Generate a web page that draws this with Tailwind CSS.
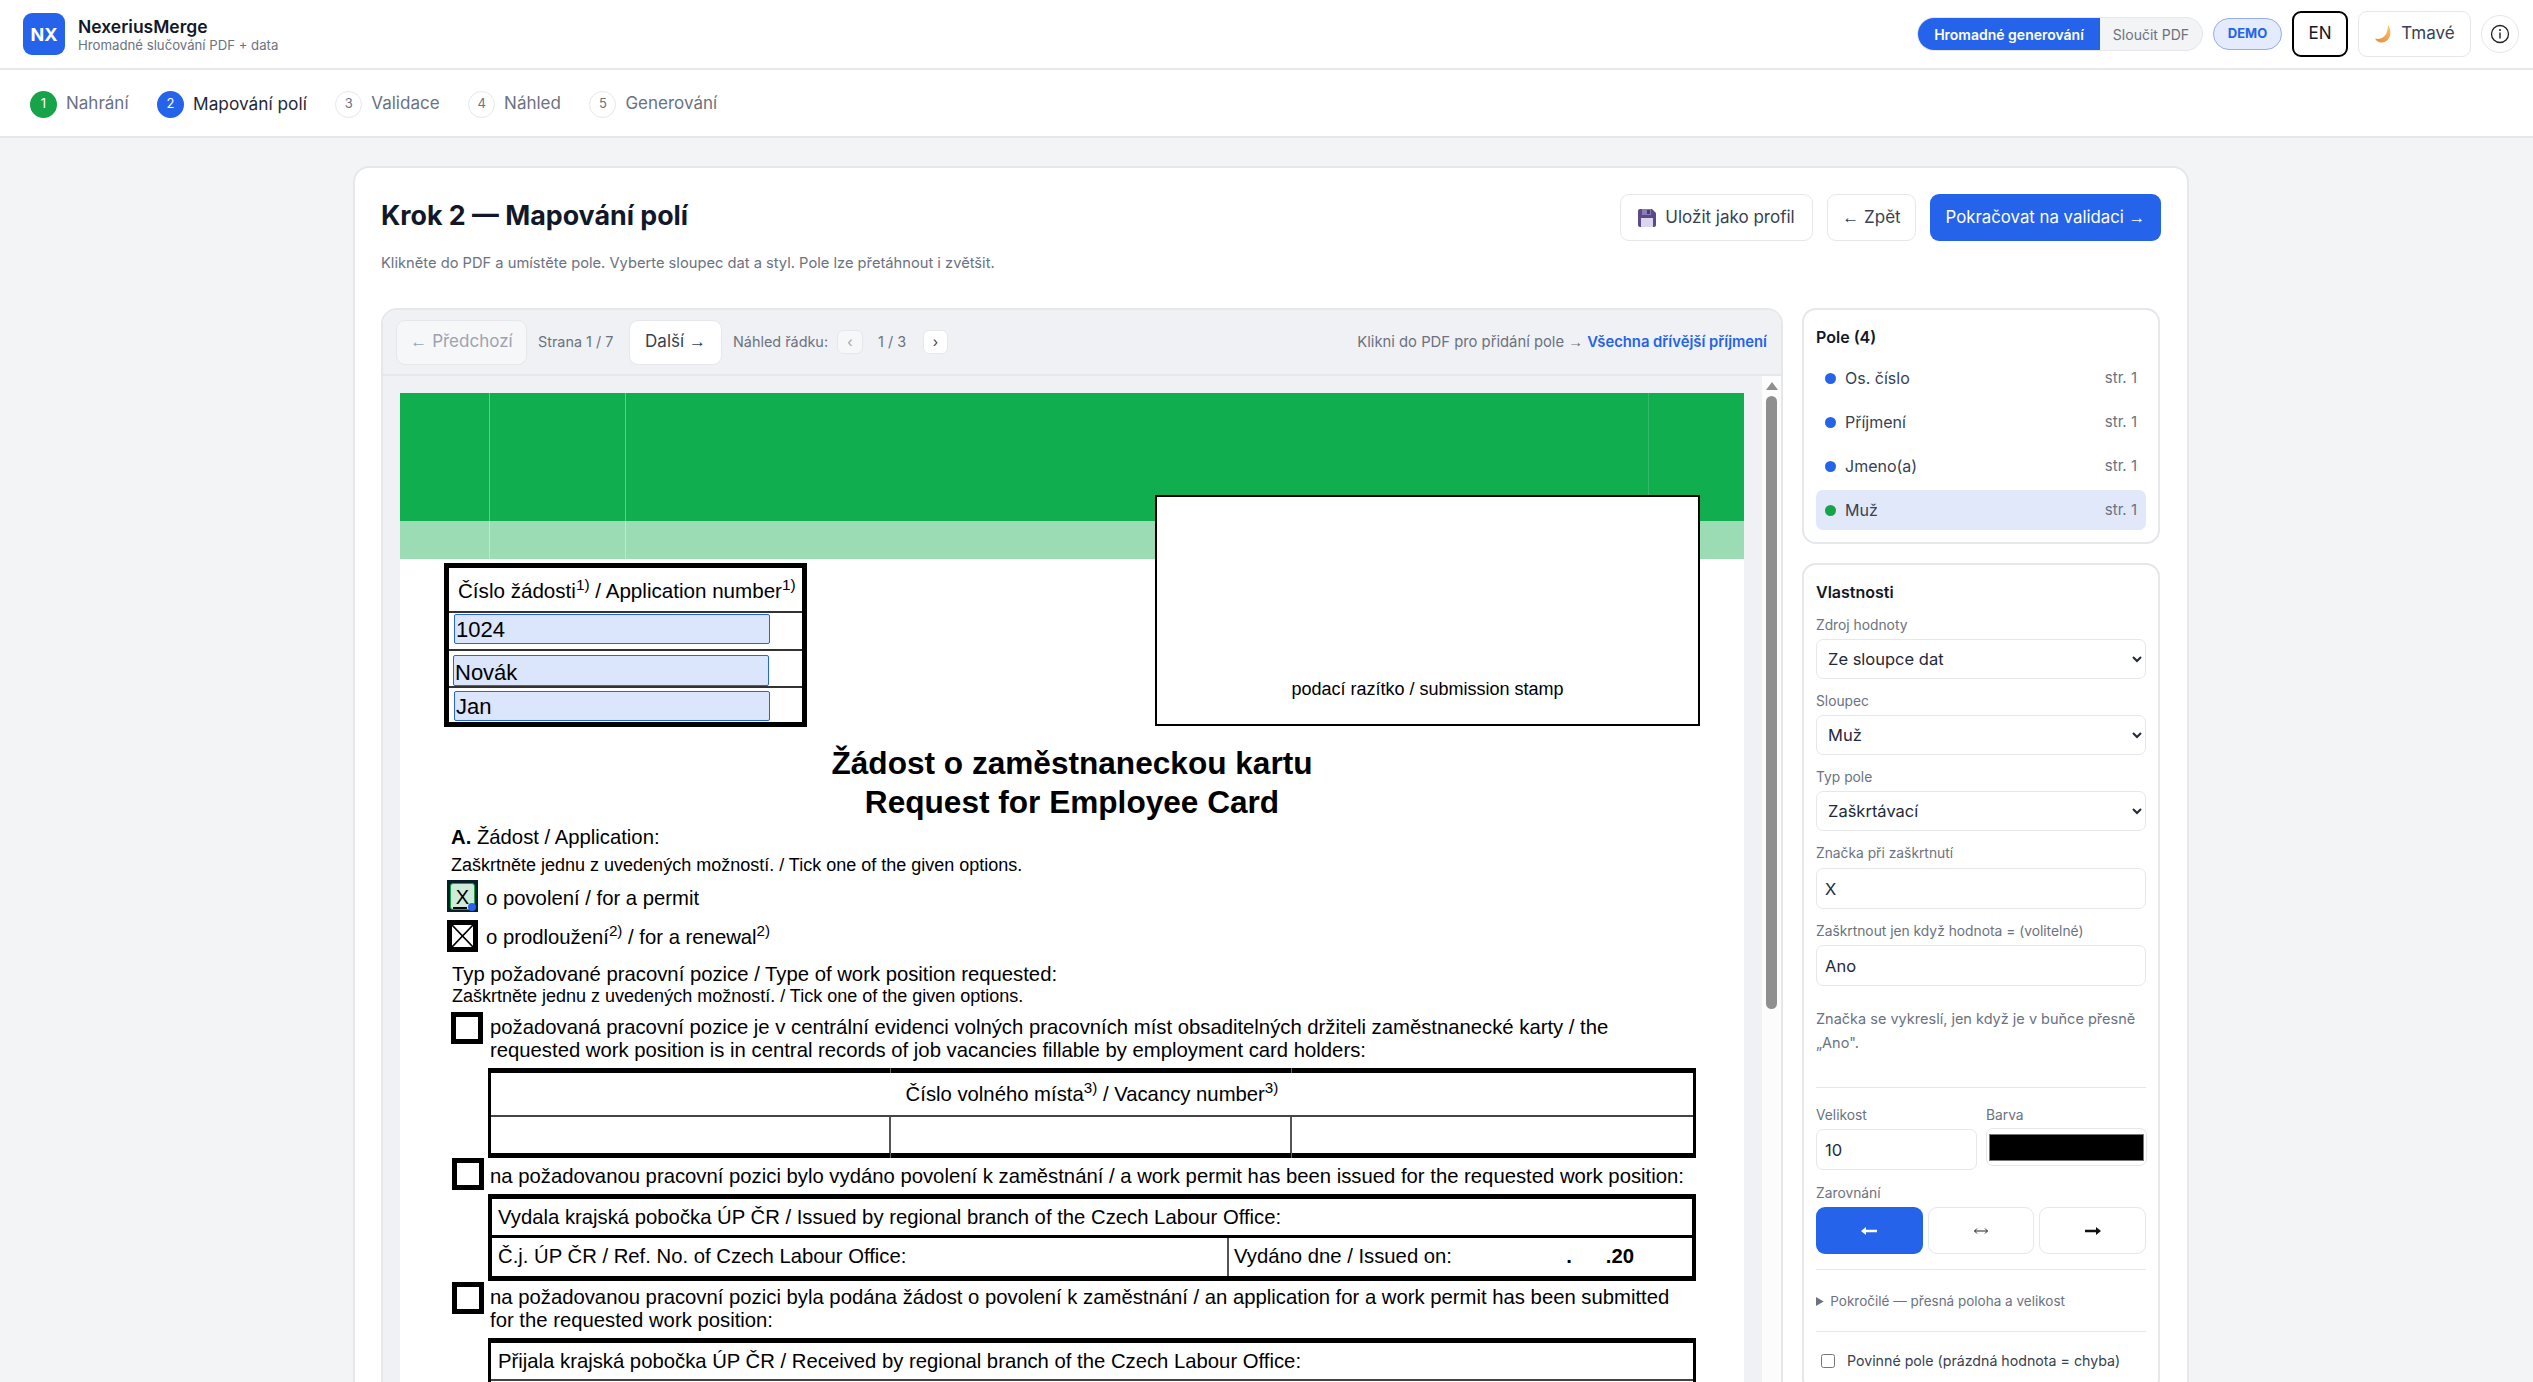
<!DOCTYPE html>
<html lang="cs">
<head>
<meta charset="utf-8">
<title>NexeriusMerge</title>
<script src="https://cdn.jsdelivr.net/npm/@tailwindcss/browser@4"></script>
</head>
<body class="h-screen overflow-hidden bg-[#f3f4f6] font-['Inter',sans-serif] text-[#111827]">

<header class="h-[70px] bg-white border-b-2 border-[#e5e7eb] flex items-center justify-between pl-[23px] pr-[14px]">
  <div class="flex items-center gap-[13px]">
    <div class="w-[42px] h-[42px] rounded-[9px] bg-[#2563eb] text-white font-bold text-[18px] flex items-center justify-center">NX</div>
    <div class="flex flex-col">
      <span class="text-[17.500px] leading-[21px] font-semibold">NexeriusMerge</span>
      <span class="text-[13.200px] leading-[16px] text-[#6b7280]">Hromadné slučování PDF + data</span>
    </div>
  </div>
  <div class="flex items-center">
    <div class="flex w-[286px] h-[34px] rounded-full overflow-hidden border border-[#e5e7eb] bg-[#f3f4f6] text-[14px]">
      <span class="w-[182px] bg-[#2563eb] text-white font-semibold flex items-center justify-center">Hromadné generování</span>
      <span class="flex-1 text-[#6b7280] flex items-center justify-center">Sloučit PDF</span>
    </div>
    <span class="ml-[10px] w-[69px] h-[32px] rounded-full bg-[#e4ebfc] border border-[#93aee8] text-[#2563eb] text-[13px] font-bold flex items-center justify-center">DEMO</span>
    <button class="ml-[10px] w-[56px] h-[46px] rounded-[9px] border-[2.500px] border-black bg-white text-[17px]">EN</button>
    <button class="ml-[10px] w-[113px] h-[46px] rounded-[9px] border border-[#e5e7eb] bg-white text-[17px] text-[#374151] flex items-center justify-center gap-[7px]">
      <svg width="20" height="20" viewBox="0 0 20 20"><defs><linearGradient id="moon" x1="0.800" y1="0" x2="0.200" y2="1"><stop offset="0" stop-color="#f8c26a"/><stop offset="1" stop-color="#e8913f"/></linearGradient></defs><path d="M14 1c5 7 2 17-6 17.500-3 .2-5.500-1-7-4 5 1.200 9-.5 11-4.500 1.500-3 2-6 2-9z" fill="url(#moon)"/></svg>
      <span>Tmavé</span>
    </button>
    <button class="ml-[10px] w-[38px] h-[38px] rounded-full border border-[#e5e7eb] bg-white flex items-center justify-center">
      <svg width="20" height="20" viewBox="0 0 20 20" fill="none" stroke="#222"><circle cx="10" cy="10" r="8.500" stroke-width="1.300"/><circle cx="10" cy="6" r="1" fill="#222" stroke="none"/><path d="M10 8.500v6" stroke-width="1.400"/></svg>
    </button>
  </div>
</header>

<nav class="h-[68px] bg-white border-b-2 border-[#e5e7eb] flex items-center pl-[30px] pt-[2px] gap-[28.500px] text-[17px]">
  <div class="flex items-center gap-[9px]"><span class="w-[27px] h-[27px] rounded-full bg-[#16a34a] text-white text-[13px] flex items-center justify-center">1</span><span class="text-[#6b7280]">Nahrání</span></div>
  <div class="flex items-center gap-[9px]"><span class="w-[27px] h-[27px] rounded-full bg-[#2563eb] text-white text-[13px] flex items-center justify-center">2</span><span class="text-[17.300px] text-[#1f2937]">Mapování polí</span></div>
  <div class="flex items-center gap-[9px]"><span class="w-[27px] h-[27px] rounded-full border border-[#e5e7eb] bg-white text-[#6b7280] text-[13px] flex items-center justify-center">3</span><span class="text-[#6b7280]">Validace</span></div>
  <div class="flex items-center gap-[9px]"><span class="w-[27px] h-[27px] rounded-full border border-[#e5e7eb] bg-white text-[#6b7280] text-[13px] flex items-center justify-center">4</span><span class="text-[#6b7280]">Náhled</span></div>
  <div class="flex items-center gap-[9px]"><span class="w-[27px] h-[27px] rounded-full border border-[#e5e7eb] bg-white text-[#6b7280] text-[13px] flex items-center justify-center">5</span><span class="text-[#6b7280]">Generování</span></div>
</nav>

<main class="pt-[28px] pl-[353px]">
  <section class="w-[1836px] bg-white border-2 border-[#e5e7eb] rounded-[16px] px-[26px] pt-[26px]">
    <div class="flex items-start justify-between">
      <div class="pt-[1px]">
        <h1 class="text-[26.800px] leading-[40px] font-bold">Krok 2 — Mapování polí</h1>
        <p class="mt-[18px] text-[14.700px] leading-[20px] text-[#6b7280]">Klikněte do PDF a umístěte pole. Vyberte sloupec dat a styl. Pole lze přetáhnout i zvětšit.</p>
      </div>
      <div class="flex items-center gap-[14px] text-[17px]">
        <button class="h-[47px] w-[193px] rounded-[9px] border border-[#e5e7eb] bg-white text-[#374151] flex items-center justify-center gap-[9px]">
          <svg width="18" height="18" viewBox="0 0 18 18"><path d="M0 2a2 2 0 0 1 2-2h12l4 4v12a2 2 0 0 1-2 2H2a2 2 0 0 1-2-2z" fill="#5b4a86"/><rect x="4" y="0" width="9" height="6" fill="#8b7cb8"/><rect x="9" y="1" width="3" height="4" fill="#4a3b70"/><rect x="3" y="9" width="12" height="9" fill="#dcd5ef"/></svg>
          <span>Uložit jako profil</span>
        </button>
        <button class="h-[47px] w-[89px] rounded-[9px] border border-[#e5e7eb] bg-white text-[#374151]"><span class="font-['Liberation_Sans']">←</span> Zpět</button>
        <button class="h-[47px] w-[231px] rounded-[9px] bg-[#2563eb] text-white text-[16.800px]">Pokračovat na validaci <span class="font-['Liberation_Sans']">→</span></button>
      </div>
    </div>

    <div class="mt-[35px] flex gap-[19px] items-start">
      <div class="w-[1402px] border-2 border-[#e5e7eb] rounded-t-[16px] overflow-hidden">
        <div class="h-[66px] bg-[#eff1f4] border-b-2 border-[#e5e7eb] pl-[13px] pr-[14px] flex items-center text-[14.400px] text-[#6b7280]">
          <button class="w-[131px] h-[45px] rounded-[9px] border border-[#e5e7eb] bg-[#f6f7f8] text-[#9ca3af] text-[17px]"><span class="font-['Liberation_Sans']">←</span> Předchozí</button>
          <span class="ml-[11px] w-[91px]">Strana 1 / 7</span>
          <button class="w-[93px] h-[45px] rounded-[9px] border border-[#e5e7eb] bg-white text-[#374151] text-[17px]">Další <span class="font-['Liberation_Sans']">→</span></button>
          <span class="ml-[11px] w-[104px] whitespace-nowrap">Náhled řádku:</span>
          <button class="w-[26px] h-[24px] rounded-[6px] border border-[#e5e7eb] bg-[#f6f7f8] text-[#9ca3af] text-[14px] leading-none">‹</button>
          <span class="ml-[15px] w-[45px]">1 / 3</span>
          <button class="w-[25px] h-[24px] rounded-[6px] border border-[#e5e7eb] bg-white text-[#374151] text-[14px] leading-none">›</button>
          <span class="ml-auto text-[14.800px]">Klikni do PDF pro přidání pole <span class="font-['Liberation_Sans']">→</span> <b class="font-semibold text-[#2563eb]">Všechna dřívější příjmení</b></span>
        </div>
        <div class="flex h-[1100px] bg-[#eff1f4]">
          <div class="flex-1 pl-[17px] pr-[17px] pt-[17px]">
            <div class="relative w-[1344px] h-[1900px] bg-white text-black font-['Liberation_Sans',Arial,sans-serif] text-[20.300px] leading-[24px]">
              <div class="h-[128px] bg-[#11ae50]"></div>
              <div class="h-[38px] bg-[#9cdcb5]"></div>
              <i class="absolute top-0 left-[89px] w-px h-[166px] bg-white/35"></i>
              <i class="absolute top-0 left-[225px] w-px h-[166px] bg-white/35"></i>
              <i class="absolute top-0 left-[1248px] w-px h-[102px] bg-white/15"></i>

              <div class="absolute left-[755px] top-[102px] w-[545px] h-[231px] bg-white border-2 border-black flex items-end justify-center pb-[23px] text-[18px]">podací razítko / submission stamp</div>

              <div class="absolute left-[44px] top-[170px] w-[363px] h-[164px] border-[5px] border-black bg-white flex flex-col">
                <div class="h-[43px] pl-[9px] pt-[2px] flex items-center text-[20.600px] whitespace-nowrap"><span>Číslo žádosti<sup>1)</sup> / Application number<sup>1)</sup></span></div>
                <div class="h-[38px] border-t-2 border-[#333]"></div>
                <div class="h-[37px] border-t-2 border-[#333]"></div>
                <div class="flex-1 border-t-2 border-[#333]"></div>
              </div>
              <div class="absolute left-[54px] top-[221px] w-[316px] h-[30px] bg-[#dbe5fb] border-[1.500px] border-[#2563eb] rounded-[2px] pl-[1px] text-[22px] leading-[30px]">1024</div>
              <div class="absolute left-[53px] top-[262px] w-[316px] h-[31px] bg-[#dbe5fb] border-[1.500px] border-[#2563eb] rounded-[2px] pl-[1px] text-[22px] leading-[34px]">Novák</div>
              <div class="absolute left-[54px] top-[298px] w-[316px] h-[30px] bg-[#dbe5fb] border-[1.500px] border-[#2563eb] rounded-[2px] pl-[1px] text-[22px] leading-[30px]">Jan</div>

              <div class="absolute left-0 top-[351px] w-full text-center font-bold text-[31.600px] leading-[39px]">Žádost o zaměstnaneckou kartu<br>Request for Employee Card</div>

              <div class="absolute left-[51px] top-[432px]"><b>A.</b> Žádost / Application:</div>
              <div class="absolute left-[51px] top-[460px] text-[18px] whitespace-nowrap">Zaškrtněte jednu z uvedených možností. / Tick one of the given options.</div>

              <div class="absolute left-[47px] top-[487px] w-[31px] h-[32px] bg-[#06202a]"></div>
              <div class="absolute left-[50px] top-[490px] w-[25px] h-[27px] rounded-[3px] border-[1.500px] border-[#16a34a] bg-[#cdebd8] text-[20px] leading-[26px] text-center">X</div>
              <i class="absolute left-[53px] top-[514px] w-[14px] h-[2px] bg-black"></i>
              <i class="absolute left-[68px] top-[510px] w-[8px] h-[8px] rounded-full bg-[#2563eb]"></i>
              <div class="absolute left-[86px] top-[493px]">o povolení / for a permit</div>

              <svg class="absolute left-[47px] top-[527px]" width="31" height="32" viewBox="0 0 31 32"><rect x="2.500" y="2.500" width="26" height="27" fill="#fff" stroke="#000" stroke-width="5"/><path d="M5 5l21 22M26 5L5 27" stroke="#000" stroke-width="1.800"/></svg>
              <div class="absolute left-[86px] top-[532px]">o prodloužení<sup>2)</sup> / for a renewal<sup>2)</sup></div>

              <div class="absolute left-[52px] top-[569px] whitespace-nowrap">Typ požadované pracovní pozice / Type of work position requested:</div>
              <div class="absolute left-[52px] top-[591px] text-[18px] whitespace-nowrap">Zaškrtněte jednu z uvedených možností. / Tick one of the given options.</div>

              <div class="absolute left-[51px] top-[619px] w-[32px] h-[32px] border-[5px] border-black"></div>
              <div class="absolute left-[90px] top-[622px] whitespace-nowrap">požadovaná pracovní pozice je v centrální evidenci volných pracovních míst obsaditelných držiteli zaměstnanecké karty / the</div>
              <div class="absolute left-[90px] top-[645px] whitespace-nowrap">requested work position is in central records of job vacancies fillable by employment card holders:</div>

              <div class="absolute left-[88px] top-[675px] w-[1208px] h-[90px] border-x-[3px] border-y-[5px] border-black grid grid-cols-[400px_401px_1fr] grid-rows-[44px_1fr]">
                <div class="col-span-3 flex items-center justify-center border-b-2 border-[#444]"><span>Číslo volného místa<sup>3)</sup> / Vacancy number<sup>3)</sup></span></div>
                <div class="border-r-2 border-[#555]"></div>
                <div class="border-r-2 border-[#555]"></div>
                <div></div>
              </div>
              <i class="absolute left-[490px] top-[675px] w-px h-[5px] bg-[#666]"></i>
              <i class="absolute left-[891px] top-[675px] w-px h-[5px] bg-[#666]"></i>
              <i class="absolute left-[490px] top-[760px] w-px h-[5px] bg-[#666]"></i>
              <i class="absolute left-[891px] top-[760px] w-px h-[5px] bg-[#666]"></i>

              <div class="absolute left-[52px] top-[765px] w-[32px] h-[32px] border-[5px] border-black"></div>
              <div class="absolute left-[90px] top-[771px] whitespace-nowrap">na požadovanou pracovní pozici bylo vydáno povolení k zaměstnání / a work permit has been issued for the requested work position:</div>

              <div class="absolute left-[88px] top-[801px] w-[1208px] h-[87px] border-x-[4px] border-y-[5px] border-black grid grid-cols-[737px_1fr] grid-rows-[39px_1fr]">
                <div class="col-span-2 pl-[6px] flex items-center border-b-[3px] border-black">Vydala krajská pobočka ÚP ČR / Issued by regional branch of the Czech Labour Office:</div>
                <div class="pl-[6px] pb-[2px] flex items-center border-r-2 border-[#555]">Č.j. ÚP ČR / Ref. No. of Czech Labour Office:</div>
                <div class="pl-[5px] pb-[2px] flex items-center justify-between pr-[58px]"><span>Vydáno dne / Issued on:</span><b class="whitespace-pre">.      .20</b></div>
              </div>

              <div class="absolute left-[52px] top-[889px] w-[32px] h-[32px] border-[5px] border-black"></div>
              <div class="absolute left-[90px] top-[892px] whitespace-nowrap">na požadovanou pracovní pozici byla podána žádost o povolení k zaměstnání / an application for a work permit has been submitted</div>
              <div class="absolute left-[90px] top-[915px] whitespace-nowrap">for the requested work position:</div>

              <div class="absolute left-[88px] top-[945px] w-[1208px] h-[100px] border-x-[3px] border-y-[5px] border-black">
                <div class="h-[38px] pl-[7px] flex items-center border-b-2 border-[#444]">Přijala krajská pobočka ÚP ČR / Received by regional branch of the Czech Labour Office:</div>
              </div>
            </div>
          </div>
          <div class="w-[19px] bg-[#fcfcfd] pt-[6px] flex flex-col items-center gap-[6px]">
            <svg width="12" height="8" viewBox="0 0 12 8"><path d="M6 0l6 8H0z" fill="#8f8f8f"/></svg>
            <div class="w-[11px] h-[613px] bg-[#8f8f8f] rounded-full"></div>
          </div>
        </div>
      </div>

      <aside class="w-[358px] flex flex-col gap-[19px]">
        <div class="h-[236px] border-2 border-[#e5e7eb] rounded-[14px] bg-white px-[12px] pt-[15px]">
          <h3 class="text-[16px] leading-[24px] font-semibold">Pole (4)</h3>
          <ul class="mt-[9px] flex flex-col text-[16px] text-[#374151]">
            <li class="h-[40px] mb-[4px] rounded-[7px] px-[9px] flex items-center"><i class="w-[11px] h-[11px] rounded-full bg-[#2563eb] mr-[9px]"></i>Os. číslo<span class="ml-auto text-[15px] text-[#6b7280]">str. 1</span></li>
            <li class="h-[40px] mb-[4px] rounded-[7px] px-[9px] flex items-center"><i class="w-[11px] h-[11px] rounded-full bg-[#2563eb] mr-[9px]"></i>Příjmení<span class="ml-auto text-[15px] text-[#6b7280]">str. 1</span></li>
            <li class="h-[40px] mb-[4px] rounded-[7px] px-[9px] flex items-center"><i class="w-[11px] h-[11px] rounded-full bg-[#2563eb] mr-[9px]"></i>Jmeno(a)<span class="ml-auto text-[15px] text-[#6b7280]">str. 1</span></li>
            <li class="h-[40px] rounded-[7px] px-[9px] flex items-center bg-[#e0e8fa]"><i class="w-[11px] h-[11px] rounded-full bg-[#16a34a] mr-[9px]"></i>Muž<span class="ml-auto text-[15px] text-[#6b7280]">str. 1</span></li>
          </ul>
        </div>

        <div class="border-2 border-[#e5e7eb] rounded-[14px] bg-white px-[12px] pt-[15px] pb-[20px]">
          <h3 class="text-[16px] leading-[24px] font-semibold">Vlastnosti</h3>
          <label class="block mt-[12px] text-[13.800px] leading-[18px] text-[#6b7280]">Zdroj hodnoty</label>
          <select class="mt-[5px] block w-full h-[40px] rounded-[7px] border border-[#e5e7eb] bg-white pl-[7px] pr-[6px] text-[16.500px] text-[#1f2937]"><option>Ze sloupce dat</option></select>
          <label class="block mt-[13px] text-[13.800px] leading-[18px] text-[#6b7280]">Sloupec</label>
          <select class="mt-[5px] block w-full h-[40px] rounded-[7px] border border-[#e5e7eb] bg-white pl-[7px] pr-[6px] text-[16.500px] text-[#1f2937]"><option>Muž</option></select>
          <label class="block mt-[13px] text-[13.800px] leading-[18px] text-[#6b7280]">Typ pole</label>
          <select class="mt-[5px] block w-full h-[40px] rounded-[7px] border border-[#e5e7eb] bg-white pl-[7px] pr-[6px] text-[16.500px] text-[#1f2937]"><option>Zaškrtávací</option></select>
          <label class="block mt-[13px] text-[13.800px] leading-[18px] text-[#6b7280]">Značka při zaškrtnutí</label>
          <input class="mt-[6px] block w-full h-[41px] rounded-[7px] border border-[#e5e7eb] bg-white pl-[8px] text-[16.500px] text-[#1f2937]" value="X">
          <label class="block mt-[13px] text-[13.800px] leading-[18px] text-[#6b7280]">Zaškrtnout jen když hodnota = (volitelné)</label>
          <input class="mt-[5px] block w-full h-[41px] rounded-[7px] border border-[#e5e7eb] bg-white pl-[8px] text-[16.500px] text-[#1f2937]" value="Ano">
          <p class="mt-[21px] text-[14.500px] leading-[24px] text-[#6b7280]">Značka se vykreslí, jen když je v buňce přesně „Ano".</p>
          <hr class="mt-[32px] border-[#e5e7eb]">
          <div class="mt-[18px] grid grid-cols-[161px_161px] gap-x-[9px]">
            <div>
              <label class="block text-[13.800px] leading-[18px] text-[#6b7280]">Velikost</label>
              <input class="mt-[5px] block w-full h-[41px] rounded-[7px] border border-[#e5e7eb] bg-white pl-[8px] text-[16.500px] text-[#1f2937]" value="10">
            </div>
            <div>
              <label class="block text-[13.800px] leading-[18px] text-[#6b7280]">Barva</label>
              <div class="mt-[4px] h-[38px] rounded-[7px] border border-[#e5e7eb] bg-white p-[2px] flex items-center"><div class="w-full h-[27px] bg-black border border-[#777]"></div></div>
            </div>
          </div>
          <label class="block mt-[14px] text-[13.800px] leading-[18px] text-[#6b7280]">Zarovnání</label>
          <div class="mt-[5px] grid grid-cols-3 gap-[5px]">
            <button class="h-[47px] rounded-[9px] bg-[#2563eb] flex items-center justify-center"><svg width="16" height="8" viewBox="0 0 16 8" fill="#fff"><path d="M0 4l5-4v2.700h11v2.600H5V8z"/></svg></button>
            <button class="h-[47px] rounded-[9px] border border-[#e5e7eb] bg-white flex items-center justify-center"><svg width="14" height="8" viewBox="0 0 14 8" fill="none" stroke="#222"><path d="M0.500 4h13M3 1.500L.5 4 3 6.500M11 1.500L13.500 4 11 6.500"/></svg></button>
            <button class="h-[47px] rounded-[9px] border border-[#e5e7eb] bg-white flex items-center justify-center"><svg width="16" height="8" viewBox="0 0 16 8" fill="#111"><path d="M16 4l-5-4v2.700H0v2.600h11V8z"/></svg></button>
          </div>
          <hr class="mt-[15px] border-[#e5e7eb]">
          <details class="mt-[22px] text-[13.500px] leading-[18px] text-[#6b7280]"><summary>Pokročilé — přesná poloha a velikost</summary></details>
          <hr class="mt-[21px] border-[#e5e7eb]">
          <label class="mt-[18px] flex items-center pl-[5px] gap-[12px] text-[14.200px] text-[#374151]"><input type="checkbox" class="w-[14px] h-[14px]"><span>Povinné pole (prázdná hodnota = chyba)</span></label>
        </div>
      </aside>
    </div>
  </section>
</main>
</body>
</html>
